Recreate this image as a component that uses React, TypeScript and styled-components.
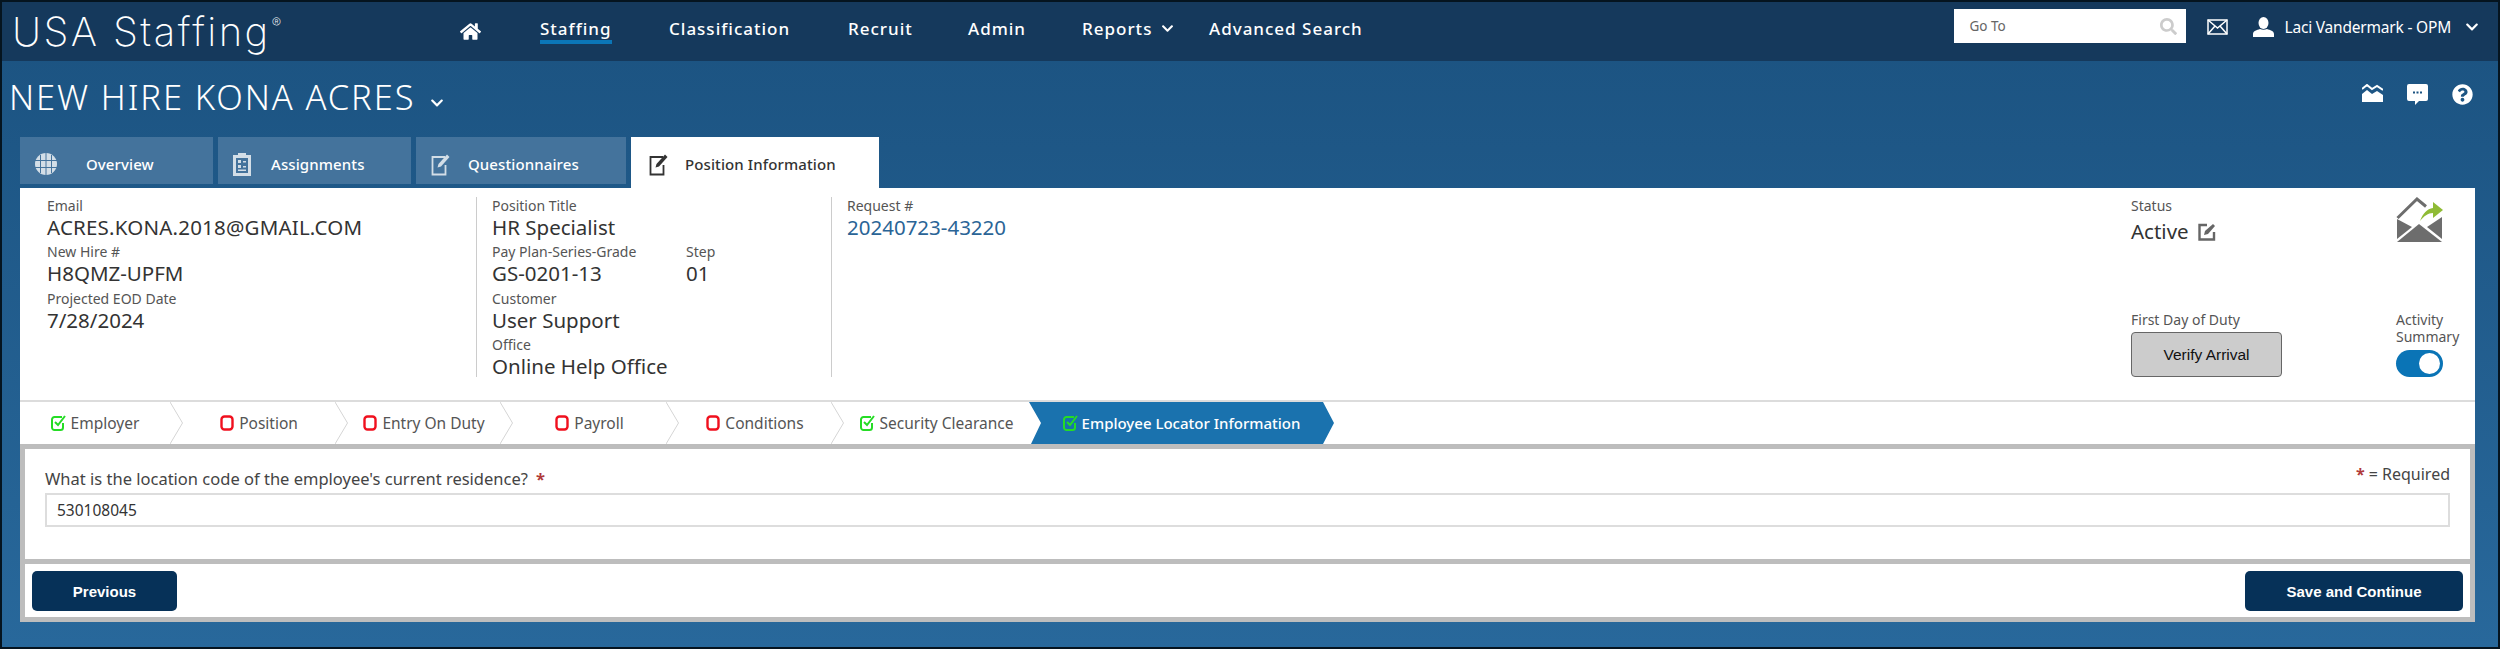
import React from 'react';
import styled, { createGlobalStyle } from 'styled-components';
import { FaHome, FaSearch, FaChevronDown, FaQuestionCircle } from 'react-icons/fa';

const UI_FONT = '"Noto Sans", "Open Sans", sans-serif';

const GlobalStyle = createGlobalStyle`
  html, body {
    margin: 0;
    padding: 0;
    background: #000;
  }
  * {
    box-sizing: border-box;
  }
`;

const Page = styled.div`
  width: 2500px;
  height: 649px;
  border: 2px solid #05141f;
  display: flex;
  flex-direction: column;
  overflow: hidden;
  font-family: ${UI_FONT};
  background: linear-gradient(#1b5280, #28689b);
`;

const Header = styled.header`
  height: 59px;
  flex: none;
  display: flex;
  background: #15395c;
  color: #fff;
`;

const Logo = styled.div`
  width: 458px;
  padding: 5px 0 0 10px;
  font-family: Inter, Lato, sans-serif;
  font-weight: 200;
  font-size: 40px;
  line-height: 50px;
  letter-spacing: 2.4px;
  white-space: nowrap;

  sup {
    font-size: 14px;
    line-height: 0;
    vertical-align: 18px;
    letter-spacing: 0;
    margin-left: 1px;
  }
`;

const HomeLink = styled.div`
  width: 80px;
  padding-top: 19px;
  font-size: 21px;
  line-height: 21px;
`;

const NavItem = styled.div<{ $width: number; $active?: boolean }>`
  width: ${p => p.$width}px;
  flex: none;
  padding-top: 17px;
  font-size: 17px;
  font-weight: 500;
  line-height: 20px;
  letter-spacing: 1px;
  white-space: nowrap;

  span {
    display: inline-block;
    height: 25px;
    border-bottom: ${p => (p.$active ? '4px solid #0b76b7' : 'none')};
  }

  svg {
    font-size: 13px;
    margin-left: 9px;
  }
`;

const HeaderRight = styled.div`
  margin-left: auto;
  display: flex;
  align-items: flex-start;
`;

const GoTo = styled.div`
  width: 232px;
  height: 34px;
  margin-top: 7px;
  padding: 0 9px 0 16px;
  background: #fff;
  display: flex;
  align-items: center;
  justify-content: space-between;
  color: #666;
  font-size: 13.5px;

  svg {
    color: #ccc;
    font-size: 17px;
  }
`;

const MailButton = styled.div`
  margin: 16px 0 0 21px;
  height: 16px;
`;

const UserBlock = styled.div`
  margin: 15px 0 0 25px;
  padding-right: 19px;
  display: flex;
  align-items: center;
  font-size: 15.5px;
  line-height: 20px;
  white-space: nowrap;
  letter-spacing: -0.2px;

  > svg:first-child {
    margin-right: 11px;
  }
  > svg:last-child {
    font-size: 14px;
    margin-left: 14px;
  }
`;

const TitleRow = styled.div`
  height: 76px;
  flex: none;
  display: flex;
  justify-content: space-between;
  color: #fff;
`;

const Title = styled.h1`
  margin: 0;
  padding: 14px 0 0 7px;
  font-weight: 300;
  font-size: 34.5px;
  line-height: 44px;
  letter-spacing: 1.9px;
  white-space: nowrap;
  font-family: ${UI_FONT};

  svg {
    font-size: 14px;
    margin-left: 15px;
  }
`;

const TitleIcons = styled.div`
  display: flex;
  align-items: flex-start;
  gap: 24px;
  padding: 23px 25px 0 0;
`;

const TabRow = styled.div`
  height: 51px;
  flex: none;
  margin-left: 18px;
  display: flex;
  align-items: flex-start;
`;

const Tab = styled.div<{ $width: number; $iconGap: number; $active?: boolean }>`
  width: ${p => p.$width}px;
  height: ${p => (p.$active ? 51 : 47)}px;
  margin-right: ${p => (p.$active ? 0 : 5)}px;
  padding: ${p => (p.$active ? '3px 0 0 18px' : '6px 0 0 15px')};
  display: flex;
  align-items: center;
  gap: ${p => p.$iconGap}px;
  flex: none;
  font-size: 15px;
  font-weight: 500;
  letter-spacing: 0.1px;
  background: ${p => (p.$active ? '#fff' : '#44739c')};
  color: ${p => (p.$active ? '#333' : '#fff')};
`;

const Panel = styled.section`
  height: 434px;
  width: 2455px;
  flex: none;
  margin-left: 18px;
  background: #fff;
  display: flex;
  flex-direction: column;
`;

const InfoArea = styled.div`
  height: 214px;
  flex: none;
  display: flex;
  padding: 9px 0 0 27px;
  border-bottom: 2px solid #dcdcdc;
  color: #333;
`;

const InfoColumn = styled.div<{ $width: number; $divided?: boolean; $inset?: number }>`
  width: ${p => p.$width}px;
  height: 180px;
  flex: none;
  border-right: ${p => (p.$divided ? '1.5px solid #ccc' : 'none')};
  padding-left: ${p => p.$inset || 0}px;
`;

const Field = styled.div<{ $width?: number }>`
  height: 46.3px;
  width: ${p => (p.$width ? `${p.$width}px` : 'auto')};
`;

const FieldPair = styled.div`
  display: flex;
`;

const FieldLabel = styled.div`
  font-size: 14px;
  line-height: 17px;
  color: #555;
  white-space: nowrap;
`;

const FieldValue = styled.div<{ $spread?: boolean }>`
  font-size: 20.5px;
  line-height: 27px;
  color: #333;
  white-space: nowrap;
  letter-spacing: ${p => (p.$spread ? '0.2px' : '0')};
`;

const LinkValue = styled(FieldValue)`
  color: #2a6496;
`;

const RightColumns = styled.div`
  margin-left: auto;
  display: flex;
`;

const StatusColumn = styled.div`
  width: 265px;
  display: flex;
  flex-direction: column;
  height: 180px;
`;

const ActivityColumn = styled.div`
  width: 79px;
  display: flex;
  flex-direction: column;
  height: 180px;
`;

const StatusValue = styled(FieldValue)`
  display: flex;
  align-items: center;
  gap: 9px;
  margin-top: 4px;
`;

const BottomBlock = styled.div`
  margin-top: auto;
`;

const VerifyButton = styled.button`
  display: block;
  width: 151px;
  height: 45px;
  margin-top: 4px;
  padding: 0;
  border: 1.5px solid #666;
  border-radius: 4px;
  background: #ccc;
  color: #111;
  font-family: "Liberation Sans", sans-serif;
  font-size: 15.5px;
`;

const Toggle = styled.div`
  width: 47px;
  height: 27px;
  margin-top: 5px;
  border-radius: 14px;
  background: #0a74b6;
  padding: 3px;
  display: flex;
  justify-content: flex-end;

  &::after {
    content: '';
    width: 21px;
    height: 21px;
    border-radius: 50%;
    background: #fff;
  }
`;

const StepRow = styled.nav`
  height: 42px;
  flex: none;
  display: flex;
  color: #555;
  font-size: 15.5px;
`;

const Step = styled.div<{ $width: number }>`
  width: ${p => p.$width}px;
  flex: none;
  display: flex;
  align-items: center;
  justify-content: center;
  gap: 5px;
  white-space: nowrap;
`;

const ActiveStep = styled(Step)`
  background: #1a72ae;
  color: #fff;
  font-size: 15px;
  font-weight: 500;
  gap: 4px;
  clip-path: polygon(0 0, 294px 0, 305px 50%, 294px 100%, 2px 100%, 12px 50%);
`;

const DividerSvg = styled.svg`
  flex: none;
`;

const Frame = styled.div`
  flex: 1;
  padding: 5px;
  background: #bdbdbd;
  display: flex;
  flex-direction: column;
  gap: 5px;
`;

const Question = styled.div`
  flex: 1;
  background: #fff;
  padding: 15px 20px 0 20px;
  color: #444;
  font-size: 16.5px;
  display: flex;
  flex-direction: column;
`;

const QuestionHead = styled.div`
  display: flex;
  justify-content: space-between;
  height: 29px;
  line-height: 20px;
`;

const QuestionLabel = styled.div`
  padding-top: 5px;
`;

const Required = styled.div`
  font-size: 16px;
`;

const Star = styled.span`
  color: #b03a3a;
  font-weight: 700;
  margin: 0 4px 0 8px;
`;

const AnswerBox = styled.div`
  height: 34px;
  border: 2px solid #ddd;
  padding: 0 10px;
  display: flex;
  align-items: center;
  font-size: 15.5px;
  color: #333;
`;

const Footer = styled.div`
  height: 53px;
  flex: none;
  background: #fff;
  padding: 7px 7px 0 7px;
  display: flex;
  justify-content: space-between;
  align-items: flex-start;
`;

const DarkButton = styled.button<{ $width: number }>`
  width: ${p => p.$width}px;
  height: 40px;
  padding: 0;
  border: none;
  border-radius: 5px;
  background: #063158;
  color: #fff;
  font-family: "Liberation Sans", sans-serif;
  font-weight: 700;
  font-size: 15px;
`;

const MailIcon = () => (
  <svg width="21" height="16" viewBox="0 0 21 16" fill="none" stroke="#fff" strokeWidth="1.5">
    <rect x="1" y="1" width="19" height="14" />
    <path d="M1 1l9.5 8L20 1M1 15l7-8M20 15l-7-8" />
  </svg>
);

const UserIcon = () => (
  <svg width="21" height="20" viewBox="0 0 21 20" fill="#fff">
    <ellipse cx="10.5" cy="6" rx="5" ry="6" />
    <path d="M0 20v-3c0-3 4-4 7-5 2 1 5 1 7 0 3 1 7 2 7 5v3z" />
  </svg>
);

const ChartMailIcon = () => (
  <svg width="21" height="18" viewBox="0 0 21 18">
    <path d="M0 5l5-4 5 4 5-3 6 4" fill="none" stroke="#fff" strokeWidth="2" />
    <path d="M0 10l5-4 5 4 5-3 6 4v7H0z" fill="#fff" />
  </svg>
);

const BubbleIcon = () => (
  <svg width="21" height="21" viewBox="0 0 21 21" fill="#fff">
    <path d="M2 0h17a2 2 0 0 1 2 2v13a2 2 0 0 1-2 2h-7l-4 4v-4H2a2 2 0 0 1-2-2V2a2 2 0 0 1 2-2z" />
    <g fill="#1c5482">
      <rect x="6" y="7.5" width="2" height="2" />
      <rect x="9.5" y="7.5" width="2" height="2" />
      <rect x="13" y="7.5" width="2" height="2" />
    </g>
  </svg>
);

const GlobeIcon = () => (
  <svg width="22" height="22" viewBox="0 0 22 22">
    <circle cx="11" cy="11" r="11" fill="#d3dee7" />
    <path d="M0 7.5h22M0 14.5h22M11 0v22M5.5 2v18M16.5 2v18" stroke="#44739c" strokeWidth="1" fill="none" />
  </svg>
);

// clipboard with a small x/check list, as on the Assignments tab
const ClipboardIcon = () => (
  <svg width="18" height="24" viewBox="0 0 18 24" fill="#d3dee7">
    <path d="M0 3h5V1h8v2h5v21H0zM3 6v15h12V6z" fillRule="evenodd" />
    <path d="M5 8h3v3H5zM10 9h3v1.5h-3zM5 13h3v3H5zM10 14h3v1.5h-3zM5 17.500h8V19H5z" />
  </svg>
);

const EditIcon = ({ color }: { color: string }) => (
  <svg width="20" height="24" viewBox="0 0 20 24" fill="none" stroke={color}>
    <path d="M14 5H1.500v17.500h13V13" strokeWidth="1.8" />
    <path d="M6.500 15.500l1-3.500L16 2.500l2.500 2.500-8.500 9.500z" fill={color} stroke="none" />
  </svg>
);

const StatusEditIcon = () => (
  <svg width="18" height="18" viewBox="0 0 18 18" fill="none" stroke="#666">
    <path d="M9 2H1.500v14.500H16V9" strokeWidth="2.4" />
    <path d="M6 12l1-4 8-7 2 2-7 8z" fill="#666" stroke="none" />
  </svg>
);

const SendMailIcon = () => (
  <svg width="47" height="46" viewBox="0 0 47 46">
    <g fill="#6d6d6d">
      <path d="M1 45h45L23 27z" />
      <path d="M1 22v20l15-12z" />
      <path d="M46 20v22L31 30z" />
    </g>
    <path d="M1.500 21L21 2l9 7.500" fill="none" stroke="#6d6d6d" strokeWidth="3" />
    <path d="M24 24c3-8 7-12 13-13V5l10 8-10 8v-5c-5 0-9 3-13 8z" fill="#8fbb35" />
  </svg>
);

const CheckIcon = () => (
  <svg width="15" height="16" viewBox="0 0 15 16" fill="none" stroke="#25dc25" strokeWidth="2">
    <path d="M11 2H3.500A2.500 2.500 0 0 0 1 4.500v8A2.500 2.500 0 0 0 3.500 15h6a2.500 2.500 0 0 0 2.500-2.500V8" />
    <path d="M4 7l3 3 7-9" />
  </svg>
);

const OpenIcon = () => (
  <svg width="14" height="16" viewBox="0 0 14 16" fill="none" stroke="#f0101e" strokeWidth="2.4">
    <rect x="1.500" y="1.500" width="11" height="13" rx="3" />
  </svg>
);

const StepDivider = () => (
  <DividerSvg width="13" height="42" viewBox="0 0 13 42" fill="none" stroke="#d5d5d5">
    <path d="M0 0l12.500 21L0 42" />
  </DividerSvg>
);

const App = () => {
  return (
    <Page>
      <GlobalStyle />
      <Header>
        <Logo>USA Staffing<sup>®</sup></Logo>
        <HomeLink><FaHome /></HomeLink>
        <NavItem $width={129} $active><span>Staffing</span></NavItem>
        <NavItem $width={179}><span>Classification</span></NavItem>
        <NavItem $width={120}><span>Recruit</span></NavItem>
        <NavItem $width={114}><span>Admin</span></NavItem>
        <NavItem $width={127}><span>Reports</span><FaChevronDown /></NavItem>
        <NavItem $width={160}><span>Advanced Search</span></NavItem>
        <HeaderRight>
          <GoTo>Go To<FaSearch /></GoTo>
          <MailButton><MailIcon /></MailButton>
          <UserBlock><UserIcon />Laci Vandermark - OPM<FaChevronDown /></UserBlock>
        </HeaderRight>
      </Header>

      <TitleRow>
        <Title>NEW HIRE KONA ACRES<FaChevronDown /></Title>
        <TitleIcons>
          <ChartMailIcon />
          <BubbleIcon />
          <FaQuestionCircle size={21} />
        </TitleIcons>
      </TitleRow>

      <TabRow>
        <Tab $width={193} $iconGap={29}><GlobeIcon />Overview</Tab>
        <Tab $width={193} $iconGap={20}><ClipboardIcon />Assignments</Tab>
        <Tab $width={210} $iconGap={17}><EditIcon color="#d3dee7" />Questionnaires</Tab>
        <Tab $width={248} $iconGap={16} $active><EditIcon color="#333" />Position Information</Tab>
      </TabRow>

      <Panel>
        <InfoArea>
          <InfoColumn $width={430} $divided>
            <Field>
              <FieldLabel>Email</FieldLabel>
              <FieldValue $spread>ACRES.KONA.2018@GMAIL.COM</FieldValue>
            </Field>
            <Field>
              <FieldLabel>New Hire #</FieldLabel>
              <FieldValue>H8QMZ-UPFM</FieldValue>
            </Field>
            <Field>
              <FieldLabel>Projected EOD Date</FieldLabel>
              <FieldValue>7/28/2024</FieldValue>
            </Field>
          </InfoColumn>
          <InfoColumn $width={355} $divided $inset={15}>
            <Field>
              <FieldLabel>Position Title</FieldLabel>
              <FieldValue>HR Specialist</FieldValue>
            </Field>
            <FieldPair>
              <Field $width={194}>
                <FieldLabel>Pay Plan-Series-Grade</FieldLabel>
                <FieldValue>GS-0201-13</FieldValue>
              </Field>
              <Field>
                <FieldLabel>Step</FieldLabel>
                <FieldValue>01</FieldValue>
              </Field>
            </FieldPair>
            <Field>
              <FieldLabel>Customer</FieldLabel>
              <FieldValue>User Support</FieldValue>
            </Field>
            <Field>
              <FieldLabel>Office</FieldLabel>
              <FieldValue>Online Help Office</FieldValue>
            </Field>
          </InfoColumn>
          <InfoColumn $width={400} $inset={15}>
            <Field>
              <FieldLabel>Request #</FieldLabel>
              <LinkValue>20240723-43220</LinkValue>
            </Field>
          </InfoColumn>
          <RightColumns>
            <StatusColumn>
              <Field>
                <FieldLabel>Status</FieldLabel>
                <StatusValue>Active<StatusEditIcon /></StatusValue>
              </Field>
              <BottomBlock>
                <FieldLabel>First Day of Duty</FieldLabel>
                <VerifyButton>Verify Arrival</VerifyButton>
              </BottomBlock>
            </StatusColumn>
            <ActivityColumn>
              <SendMailIcon />
              <BottomBlock>
                <FieldLabel>Activity<br />Summary</FieldLabel>
                <Toggle />
              </BottomBlock>
            </ActivityColumn>
          </RightColumns>
        </InfoArea>

        <StepRow>
          <Step $width={150}><CheckIcon />Employer</Step>
          <StepDivider />
          <Step $width={152}><OpenIcon />Position</Step>
          <StepDivider />
          <Step $width={152}><OpenIcon />Entry On Duty</Step>
          <StepDivider />
          <Step $width={153}><OpenIcon />Payroll</Step>
          <StepDivider />
          <Step $width={152}><OpenIcon />Conditions</Step>
          <StepDivider />
          <Step $width={185}><CheckIcon />Security Clearance</Step>
          <ActiveStep $width={305}><CheckIcon />Employee Locator Information</ActiveStep>
        </StepRow>

        <Frame>
          <Question>
            <QuestionHead>
              <QuestionLabel>What is the location code of the employee's current residence?<Star>*</Star></QuestionLabel>
              <Required><Star>*</Star>= Required</Required>
            </QuestionHead>
            <AnswerBox>530108045</AnswerBox>
          </Question>
          <Footer>
            <DarkButton $width={145}>Previous</DarkButton>
            <DarkButton $width={218}>Save and Continue</DarkButton>
          </Footer>
        </Frame>
      </Panel>
    </Page>
  );
};

export default App;
